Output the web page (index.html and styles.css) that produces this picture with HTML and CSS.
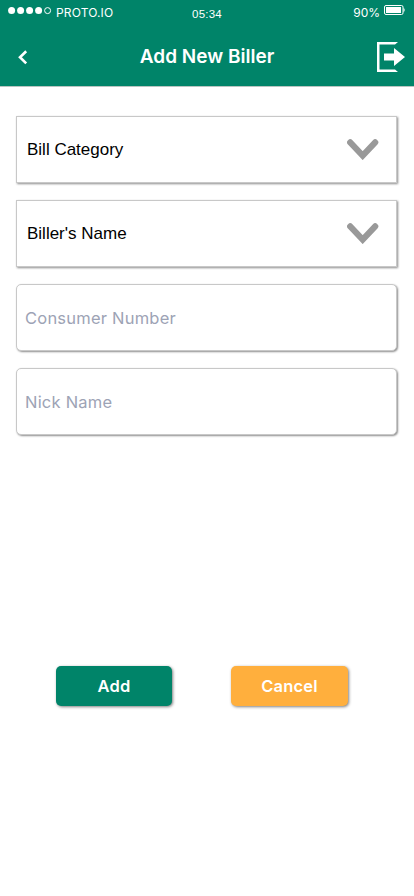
FILE: index.html
```html
<!DOCTYPE html>
<html lang="en">
<head>
<meta charset="utf-8">
<title>Add New Biller</title>
<link rel="stylesheet" href="styles.css">
</head>
<body>
<header class="header">
  <div class="status">
    <div class="carrier">
      <svg class="signal" width="44" height="8" viewBox="0 0 44 8"><g fill="#fff"><circle cx="3.6" cy="3.6" r="3.5"/><circle cx="12.6" cy="3.6" r="3.5"/><circle cx="21.6" cy="3.6" r="3.5"/><circle cx="30.6" cy="3.6" r="3.5"/></g><circle cx="39.6" cy="3.6" r="3" fill="none" stroke="#fff"/></svg>
      <span class="carrier-name">PROTO.IO</span>
    </div>
    <span class="time">05:34</span>
    <div class="power">
      <span class="percent">90%</span>
      <svg class="battery" width="21" height="10" viewBox="0 0 21 10"><rect x=".5" y=".5" width="18.5" height="9" rx="1.5" fill="none" stroke="#fff"/><rect x="2" y="2" width="15" height="6" fill="#fff"/><path d="M19.5 3C21 3.3 21 6.7 19.5 7Z" fill="#fff"/></svg>
    </div>
  </div>
  <nav class="nav">
    <svg class="back" width="10" height="15" viewBox="0 0 10 15"><path d="M8.2 1.2 2 7.2 8.2 13.4" fill="none" stroke="#fff" stroke-width="2.6"/></svg>
    <h1 class="title">Add New Biller</h1>
    <svg class="exit" width="28" height="30" viewBox="0 0 28 30"><path d="M0 0H21L18 2.5H2.5V27.5H18L21 30H0Z" fill="#fff"/><path d="M7 11.5H17V6L28 15 17 24V18.5H7Z" fill="#fff"/></svg>
  </nav>
</header>
<main class="form">
  <div class="field select"><span>Bill Category</span>
    <svg class="chevron" width="32" height="21" viewBox="0 0 32 21"><path d="M3.2 3.4 15.7 16.6 28.2 3.4" fill="none" stroke="#999" stroke-width="6.2" stroke-linecap="round"/></svg>
  </div>
  <div class="field select"><span class="biller">Biller's Name</span>
    <svg class="chevron" width="32" height="21" viewBox="0 0 32 21"><path d="M3.2 3.4 15.7 16.6 28.2 3.4" fill="none" stroke="#999" stroke-width="6.2" stroke-linecap="round"/></svg>
  </div>
  <div class="field input"><span>Consumer Number</span></div>
  <div class="field input"><span>Nick Name</span></div>
</main>
<div class="actions">
  <button class="button add">Add</button>
  <button class="button cancel">Cancel</button>
</div>
</body>
</html>
```

FILE: styles.css
```css
* { box-sizing: border-box; }
body { margin: 0; min-height: 896px; background: #fff; font-family: Inter, sans-serif; }
svg { display: block; flex: none; }
.header { height: 87px; background: #008469; border-bottom: 1px solid #b9c5c1; color: #fff; }
.status { height: 28px; display: grid; grid-template-columns: 1fr auto 1fr; font-size: 12px; line-height: 14px; }
.carrier { display: flex; padding-left: 8px; }
.signal { margin-top: 7px; }
.carrier-name { margin: 6px 0 0 4px; letter-spacing: .15px; }
.time { padding-top: 7px; font-family: "Liberation Sans", sans-serif; font-size: 11.5px; letter-spacing: .2px; }
.power { display: flex; justify-content: flex-end; padding-right: 9px; }
.percent { margin: 6px 4px 0 0; letter-spacing: 0; }
.battery { margin-top: 5px; }
.nav { height: 58px; display: grid; grid-template-columns: 1fr auto 1fr; align-items: center; padding: 0 9px 0 18px; }
.title { margin: 0 0 0 -9px; font-size: 19px; font-weight: 600; line-height: 24px; letter-spacing: 0; }
.exit { justify-self: end; }
.form { display: flex; flex-direction: column; gap: 17px; padding: 29px 17px 0 16px; }
.field { height: 67px; display: flex; align-items: center; border: 1px solid #c8c8c8; background: #fff; box-shadow: 1px 1px 2px rgba(0,0,0,.45); }
.select { justify-content: space-between; padding: 0 17px 0 10px; font-family: "Liberation Sans", sans-serif; font-size: 17px; color: #000; }
.input { border-radius: 5px; padding: 1px 8px 0; font-size: 16.5px; color: #9da3b5; letter-spacing: .22px; }
.actions { display: flex; gap: 59px; padding: 231px 0 0 56px; }
.button { width: 116px; height: 40px; border: 0; border-radius: 5px; padding: 0; color: #fff; font: 600 16.5px Inter, sans-serif; letter-spacing: .2px; box-shadow: 1px 1px 3px rgba(0,0,0,.5); }
.add { background: #008469; }
.cancel { width: 117px; background: #ffaf3d; }
```
